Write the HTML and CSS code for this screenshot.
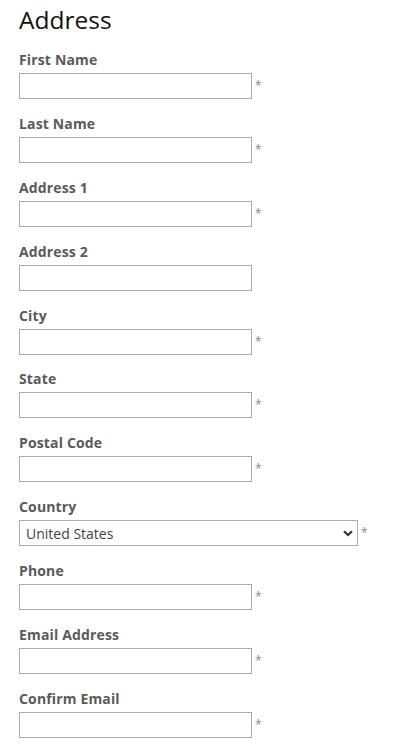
FILE: index.html
```html
<!DOCTYPE html>
<html>
<head>
<meta charset="utf-8">
<link rel="stylesheet" href="styles.css">
</head>
<body>
<div class="page">
  <h2 class="title">Address</h2>
  <form class="form">
    <div class="field"><label class="label">First Name</label><div class="row"><input class="input" type="text"><span class="req">*</span></div></div>
    <div class="field"><label class="label">Last Name</label><div class="row"><input class="input" type="text"><span class="req">*</span></div></div>
    <div class="field"><label class="label">Address 1</label><div class="row"><input class="input" type="text"><span class="req">*</span></div></div>
    <div class="field"><label class="label">Address 2</label><div class="row"><input class="input" type="text"></div></div>
    <div class="field"><label class="label">City</label><div class="row"><input class="input" type="text"><span class="req">*</span></div></div>
    <div class="field"><label class="label">State</label><div class="row"><input class="input" type="text"><span class="req">*</span></div></div>
    <div class="field"><label class="label">Postal Code</label><div class="row"><input class="input" type="text"><span class="req">*</span></div></div>
    <div class="field"><label class="label">Country</label><div class="row"><span class="select-wrap"><select class="select"><option>United States</option></select><svg class="chev" width="10" height="7" viewBox="0 0 10 7"><path d="M1 1.2 L5 5 L9 1.2" fill="none" stroke="#333" stroke-width="2.2"/></svg></span><span class="req">*</span></div></div>
    <div class="field"><label class="label">Phone</label><div class="row"><input class="input" type="text"><span class="req">*</span></div></div>
    <div class="field"><label class="label">Email Address</label><div class="row"><input class="input" type="text"><span class="req">*</span></div></div>
    <div class="field"><label class="label">Confirm Email</label><div class="row"><input class="input" type="text"><span class="req">*</span></div></div>
  </form>
</div>
</body>
</html>
```
FILE: styles.css
```css
html, body {
  margin: 0;
  padding: 0;
  background: #fff;
}
.page {
  padding: 4px 19px 0 19px;
  font-family: "Open Sans", "Liberation Sans", sans-serif;
}
.title {
  margin: 0 0 14px 0;
  font-size: 24.5px;
  font-weight: 400;
  line-height: 32px;
  color: #111;
}
.form {
  display: flex;
  flex-direction: column;
}
.field {
  display: flex;
  flex-direction: column;
  gap: 3px;
  margin-bottom: 14.9px;
  height: 49px;
}
.label {
  display: block;
  font-size: 14px;
  font-weight: 700;
  line-height: 20px;
  letter-spacing: 0.15px;
  color: #5a5a5a;
}
.row {
  display: flex;
  align-items: flex-start;
  height: 26px;
}
.input {
  box-sizing: border-box;
  width: 233px;
  height: 26px;
  margin: 0;
  padding: 0 6px;
  border: 1px solid #ababab;
  border-radius: 0;
  background: #fff;
  outline: none;
}
.req {
  margin-left: 3px;
  margin-top: 6px;
  font-size: 12px;
  line-height: 14px;
  color: #888;
}
.select-wrap {
  position: relative;
  display: block;
  width: 339px;
  height: 26px;
}
.select {
  box-sizing: border-box;
  width: 339px;
  height: 26px;
  margin: 0;
  padding: 0 20px 0 6px;
  border: 1px solid #ababab;
  border-radius: 0;
  background: #fff;
  -webkit-appearance: none;
  appearance: none;
  font-family: "Open Sans", "Liberation Sans", sans-serif;
  font-size: 14px;
  color: #444;
  outline: none;
}
.chev {
  position: absolute;
  right: 5px;
  top: 10px;
  pointer-events: none;
}
```
